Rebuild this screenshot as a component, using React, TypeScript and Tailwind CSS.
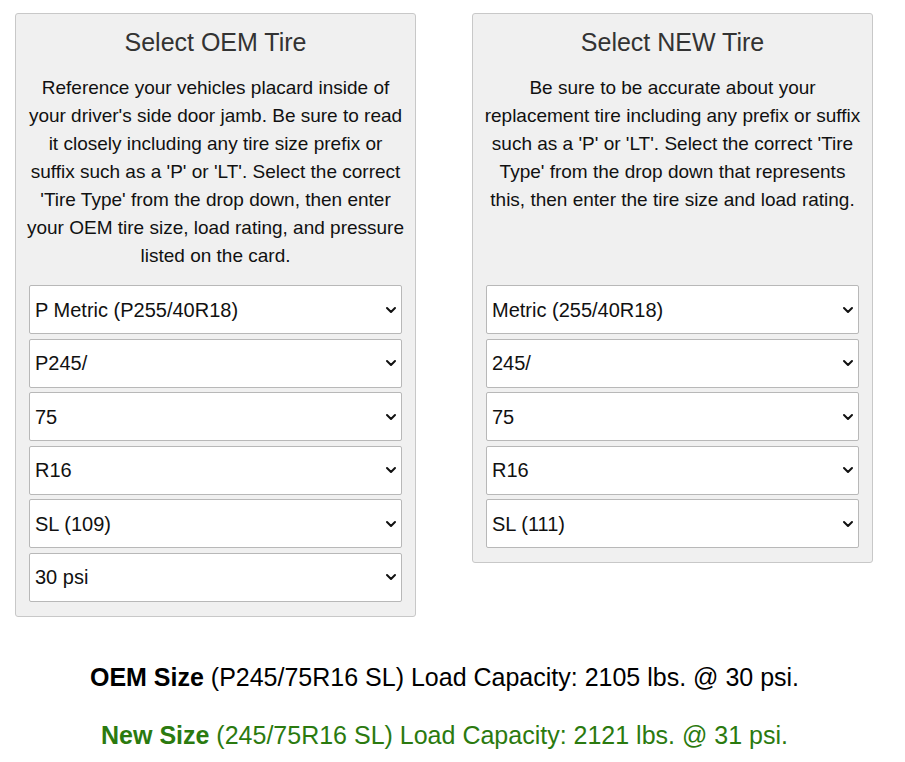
const font = { fontFamily: '"Liberation Sans", Arial, sans-serif' };

function Chevron() {
  return (
    <svg width="12" height="8" viewBox="0 0 12 8" className="pointer-events-none absolute right-[5px] top-1/2 -translate-y-1/2">
      <path d="M2 2l4 4 4-4" fill="none" stroke="#111" strokeWidth="2" strokeLinecap="round" strokeLinejoin="round" />
    </svg>
  );
}

function Dropdown({ value }: { value: string }) {
  return (
    <div className="relative">
      <select
        defaultValue={value}
        className="appearance-none w-full h-[49px] bg-white border border-[#b8b8b8] rounded-[2px] pl-[5px] pr-8 text-[20px] text-[#111] outline-none"
        style={font}
      >
        <option>{value}</option>
      </select>
      <Chevron />
    </div>
  );
}

function Panel({ title, text, values }: { title: string; text: string; values: string[] }) {
  return (
    <div className="w-[401px] bg-[#f0f0f0] border border-[#c8c8c8] rounded-[3px] px-[13px] pt-[14px] pb-[14px]">
      <h2 className="text-[25px] leading-[28px] text-center text-[#333]">{title}</h2>
      <p className="mt-[18px] -mx-[4px] h-[211px] text-[19px] leading-[28px] text-center text-[#111]">{text}</p>
      <div className="flex flex-col gap-[4.6px]">
        {values.map((v, i) => (
          <Dropdown key={i} value={v} />
        ))}
      </div>
    </div>
  );
}

export default function App() {
  return (
    <div className="bg-white w-[905px] min-h-[762px] pt-[13px]" style={font}>
      <div className="flex items-start gap-[56px] pl-[15px]">
        <Panel
          title="Select OEM Tire"
          text="Reference your vehicles placard inside of your driver's side door jamb. Be sure to read it closely including any tire size prefix or suffix such as a 'P' or 'LT'. Select the correct 'Tire Type' from the drop down, then enter your OEM tire size, load rating, and pressure listed on the card."
          values={['P Metric (P255/40R18)', 'P245/', '75', 'R16', 'SL (109)', '30 psi']}
        />
        <Panel
          title="Select NEW Tire"
          text="Be sure to be accurate about your replacement tire including any prefix or suffix such as a 'P' or 'LT'. Select the correct 'Tire Type' from the drop down that represents this, then enter the tire size and load rating."
          values={['Metric (255/40R18)', '245/', '75', 'R16', 'SL (111)']}
        />
      </div>
      <div className="mt-[46px] pr-[16px] flex flex-col items-center gap-[30px] text-[25px] leading-[28px]">
        <p className="text-black">
          <b>OEM Size</b> (P245/75R16 SL) Load Capacity: 2105 lbs. @ 30 psi.
        </p>
        <p className="text-[#2b7a0f]">
          <b>New Size</b> (245/75R16 SL) Load Capacity: 2121 lbs. @ 31 psi.
        </p>
      </div>
    </div>
  );
}
